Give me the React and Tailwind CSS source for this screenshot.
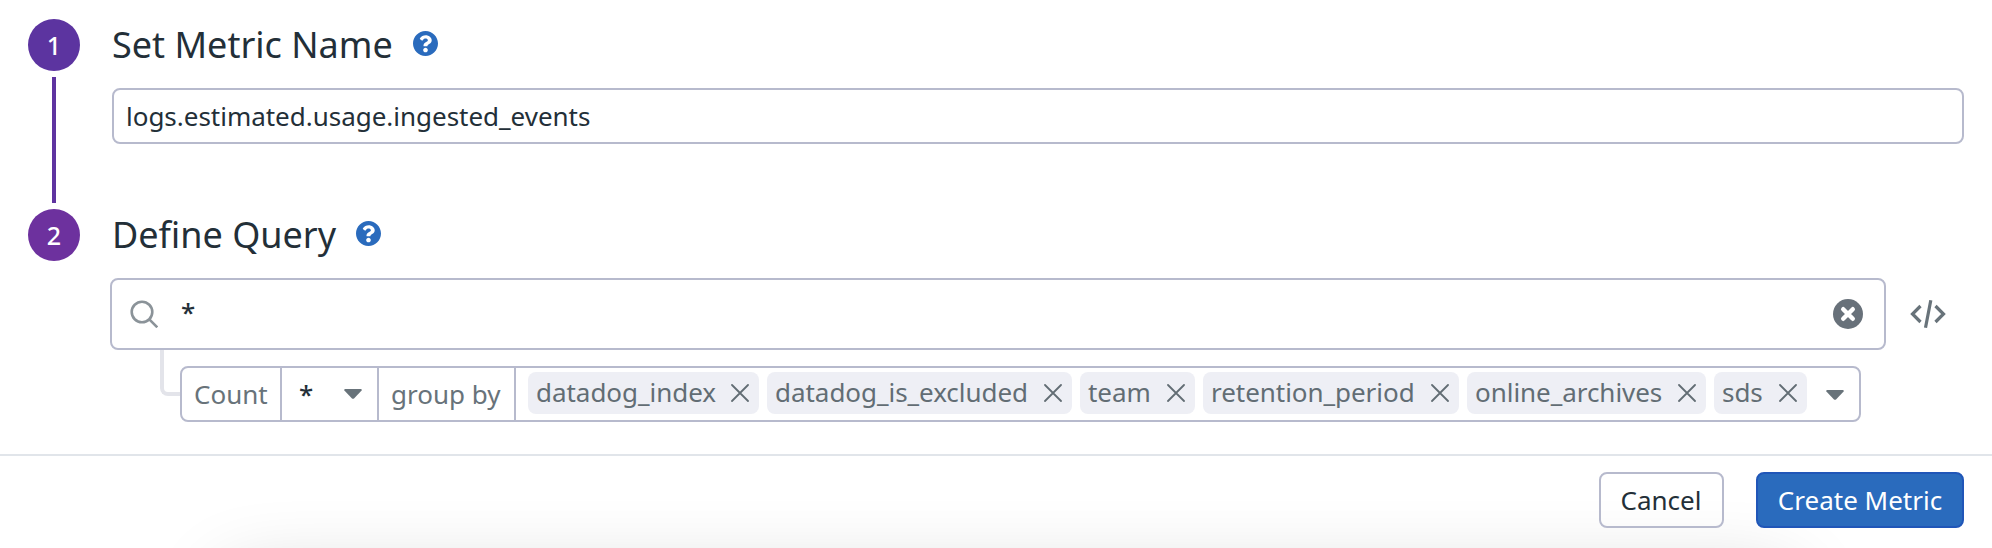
const chips = ["datadog_index", "datadog_is_excluded", "team", "retention_period", "online_archives", "sds"];
const chipWidths = ["w-[231px]", "w-[305px]", "w-[115px]", "w-[256px]", "w-[239px]", "w-[93px]"];

function Help() {
  return (
    <svg viewBox="8 8 496 496" className="mb-[3px] size-[25px]" fill="#2a6bbd">
      <path d="M504 256c0 136.997-111.043 248-248 248S8 392.997 8 256C8 119.083 119.043 8 256 8s248 111.083 248 248zM262.655 90c-54.497 0-89.255 22.957-116.549 63.758-3.536 5.286-2.353 12.415 2.715 16.258l34.699 26.31c5.205 3.947 12.621 3.008 16.665-2.122 17.864-22.658 30.113-35.797 57.303-35.797 20.429 0 45.698 13.148 45.698 32.958 0 14.976-12.363 22.667-32.534 33.976C247.128 238.528 216 254.941 216 296v4c0 6.627 5.373 12 12 12h56c6.627 0 12-5.373 12-12v-1.333c0-28.462 83.186-29.647 83.186-106.667 0-58.002-60.165-102-116.531-102zM256 338c-25.365 0-46 20.635-46 46 0 25.364 20.635 46 46 46s46-20.636 46-46c0-25.365-20.635-46-46-46z" />
    </svg>
  );
}

function Caret() {
  return (
    <svg viewBox="0 0 18 10" className="h-2.5 w-[18px] shrink-0" fill="#68737a">
      <path d="M1 0h16q1.500 .6 .4 1.800L10 9.400q-1 .8-2 0L.6 1.800Q-.5 .6 1 0z" />
    </svg>
  );
}

function Chip({ label, width }) {
  return (
    <div className={`flex h-[42px] shrink-0 items-center justify-between rounded-lg bg-[#eeeff5] pl-2 pr-[10px] text-[#626d74] ${width}`}>
      <span className="-mt-0.5 tracking-[-0.04px]">{label}</span>
      <svg viewBox="0 0 18 18" className="size-[18px]" fill="none" stroke="#626d74" strokeWidth="1.800" strokeLinecap="round">
        <path d="M1 1l16 16M17 1L1 17" />
      </svg>
    </div>
  );
}

function Title({ children }) {
  return (
    <div className="flex h-[52px] items-center gap-5">
      <h2 className="text-[36px] leading-[52px]">{children}</h2>
      <Help />
    </div>
  );
}

export default function App() {
  return (
    <div className="flex h-[548px] w-[1992px] flex-col overflow-hidden bg-white font-['Noto_Sans',sans-serif] text-[26px] leading-9 text-[#232f38]">
      <main className="flex h-[454px] shrink-0 pl-7 pt-[19px]">
        <div className="flex w-[52px] flex-col items-center gap-1.5 text-[25px] text-white">
          <div className="flex size-[52px] items-center justify-center rounded-full bg-[#5c34a0] font-medium">1</div>
          <div className="h-[126px] w-1 bg-[#5f33a0]" />
          <div className="flex size-[52px] items-center justify-center rounded-full bg-[#6d319e] font-medium">2</div>
        </div>
        <div className="ml-[30px] w-[1854px]">
          <div className="pl-0.5">
            <Title>Set Metric Name</Title>
            <div className="mt-[17px] flex h-14 items-center rounded-lg border-2 border-[#b7bacd] px-3 tracking-[-0.02px]">logs.estimated.usage.ingested_events</div>
          </div>
          <div className="mt-[65px] pl-0.5"><Title>Define Query</Title></div>
          <div className="mt-[17px] flex items-center">
            <div className="flex h-[72px] w-[1776px] items-center rounded-lg border-2 border-[#b7bacd] pl-[18px] pr-[21px]">
              <svg viewBox="0 0 28 28" className="size-7" fill="none" stroke="#8b9399" strokeWidth="2.600">
                <circle cx="12" cy="12" r="10.300" />
                <path d="M19.300 19.300l8 8" />
              </svg>
              <span className="mb-1 ml-[23px] grow font-medium">*</span>
              <svg viewBox="0 0 30 30" className="size-[30px]">
                <circle cx="15" cy="15" r="15" fill="#68717a" />
                <path d="M10.200 10.200l9.600 9.600M19.800 10.200l-9.600 9.600" stroke="white" strokeWidth="4.400" strokeLinecap="round" />
              </svg>
            </div>
            <svg viewBox="0 0 36 28" className="ml-6 h-7 w-9" fill="none" stroke="#68737a" strokeWidth="3.200">
              <path d="M10.500 6l-8 8 8 8M25.500 6l8 8-8 8M20.800 .3l-5.300 27.400" />
            </svg>
          </div>
          <div className="flex pl-[50px]">
            <div className="h-[46px] w-5 rounded-bl-lg border-b-4 border-l-4 border-[#e3e4ea]" />
            <div className="mt-4 flex h-14 w-[1681px] rounded-lg border-2 border-[#b7bacd] text-[#68737a]">
              <div className="flex w-[100px] items-center border-r-2 border-[#b7bacd] pl-3">Count</div>
              <div className="flex w-[97px] items-center justify-between border-r-2 border-[#b7bacd] pl-[17px] pr-[15px]">
                <span className="font-medium text-[#232f38]">*</span>
                <Caret />
              </div>
              <div className="flex w-[137px] items-center border-r-2 border-[#b7bacd] pl-3">group by</div>
              <div className="flex grow gap-2 pl-3 pt-1">
                {chips.map((c, i) => <Chip key={c} label={c} width={chipWidths[i]} />)}
                <div className="ml-[11px] mt-[18px] flex h-2.5"><Caret /></div>
              </div>
            </div>
          </div>
        </div>
      </main>
      <footer className="relative h-[94px] shrink-0 overflow-hidden border-t-2 border-[#e1e5ea]">
        <div className="absolute left-[226px] right-[200px] top-[122px] h-[300px] rounded-lg shadow-[0_0_80px_rgba(0,0,0,0.2)]" />
        <div className="relative flex justify-end gap-8 pr-7 pt-4">
          <button className="flex h-14 w-[125px] items-center justify-center rounded-lg border-2 border-[#b7bacd] pr-px">Cancel</button>
          <button className="flex h-14 w-[208px] items-center justify-center rounded-lg border-2 border-[#2056b8] bg-[#2a6bbd] text-white">Create Metric</button>
        </div>
      </footer>
    </div>
  );
}
